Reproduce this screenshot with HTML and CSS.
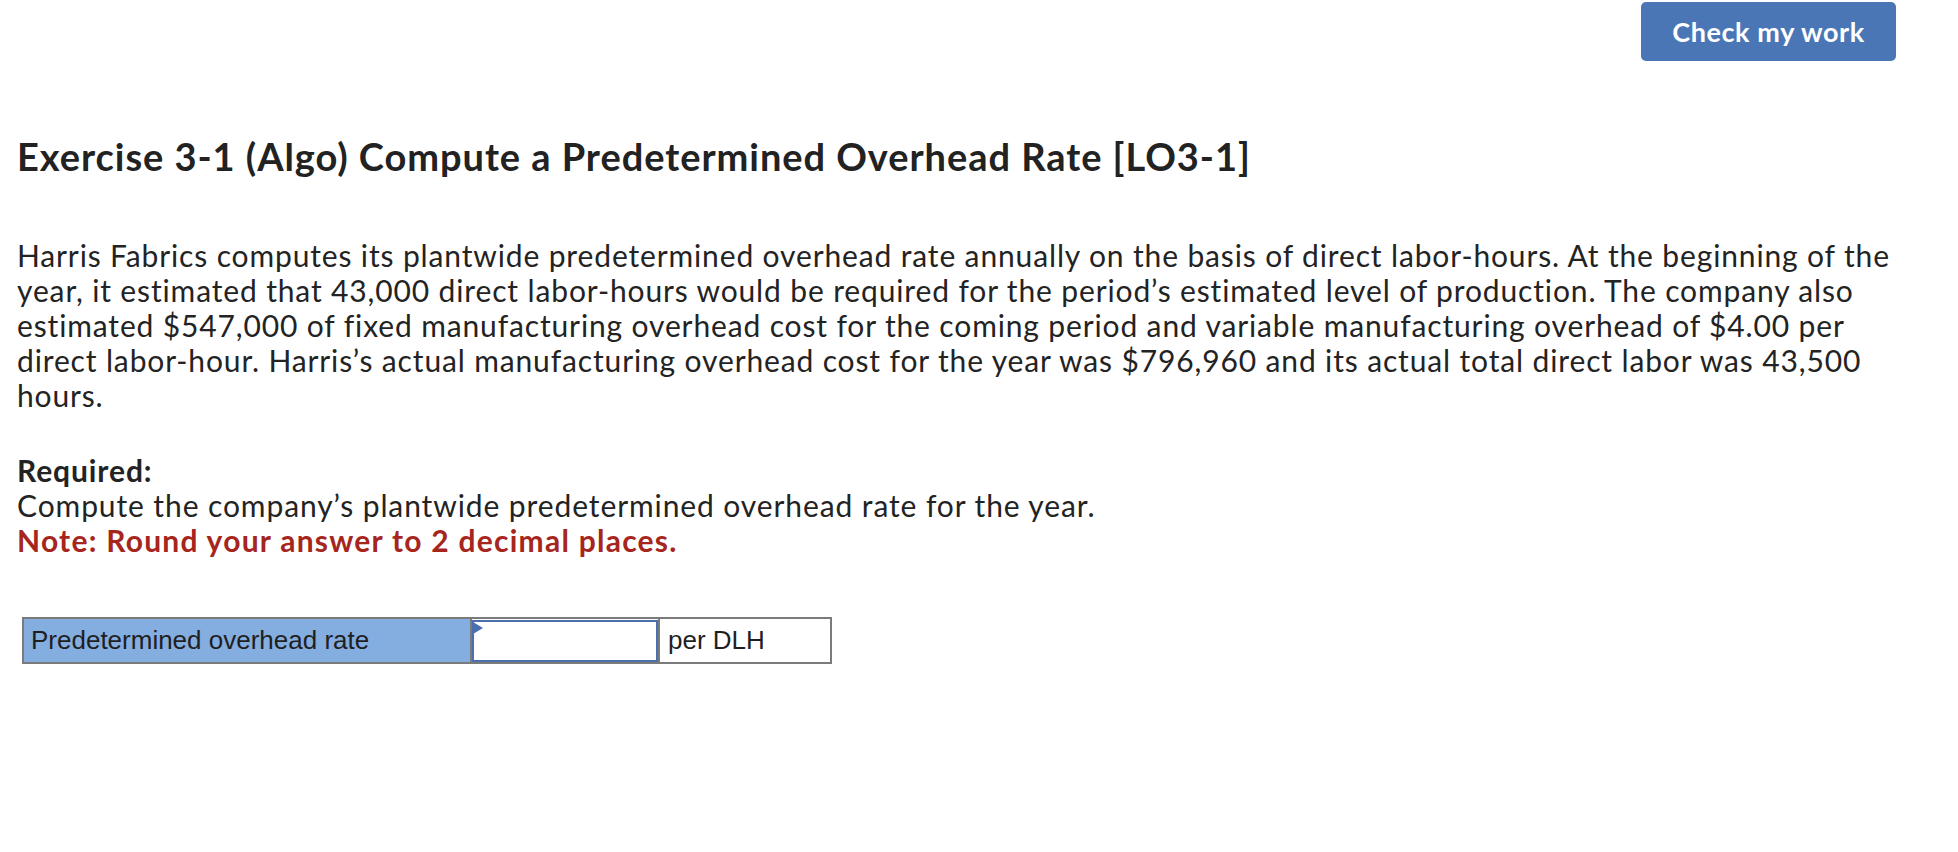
FILE: index.html
```html
<!DOCTYPE html>
<html lang="en">
<head>
<meta charset="utf-8">
<title>Exercise 3-1 (Algo)</title>
<link rel="stylesheet" href="styles.css">
</head>
<body>
<div class="page">
  <div class="topbar">
    <button class="check-btn" type="button">Check my work</button>
  </div>
  <h1 class="title">Exercise 3-1 (Algo) Compute a Predetermined Overhead Rate [LO3-1]</h1>
  <p class="intro">Harris Fabrics computes its plantwide predetermined overhead rate annually on the basis of direct labor-hours. At the beginning of the year, it estimated that 43,000 direct labor-hours would be required for the period’s estimated level of production. The company also estimated $547,000 of fixed manufacturing overhead cost for the coming period and variable manufacturing overhead of $4.00 per direct labor-hour. Harris’s actual manufacturing overhead cost for the year was $796,960 and its actual total direct labor was 43,500 hours.</p>
  <div class="required">
    <div class="req-label">Required:</div>
    <div class="req-text">Compute the company’s plantwide predetermined overhead rate for the year.</div>
    <div class="req-note">Note: Round your answer to 2 decimal places.</div>
  </div>
  <div class="answer-row">
    <div class="cell cell-label">Predetermined overhead rate</div>
    <div class="cell cell-input"><span class="flag"></span><input class="answer-input" type="text" aria-label="Predetermined overhead rate"></div>
    <div class="cell cell-unit">per DLH</div>
  </div>
</div>
</body>
</html>
```

FILE: styles.css
```css
html, body {
  margin: 0;
  padding: 0;
  background: #ffffff;
}

body {
  font-family: "Lato", "Open Sans", sans-serif;
  color: #232323;
}

.page {
  padding: 0 17px;
}

.topbar {
  display: flex;
  justify-content: flex-end;
  padding-top: 2px;
  padding-right: 45px;
}

.check-btn {
  width: 255px;
  height: 59px;
  border: none;
  border-radius: 5px;
  background: #4a76b6;
  color: #ffffff;
  font-family: "Lato", "Open Sans", sans-serif;
  font-weight: 700;
  font-size: 27px;
  letter-spacing: 0.6px;
  cursor: pointer;
  padding: 0;
}

.title {
  margin: 73px 0 0;
  font-size: 38px;
  line-height: 44px;
  font-weight: 700;
  color: #222222;
  letter-spacing: 0.95px;
}

.intro {
  margin: 60px 0 0;
  width: 1875px;
  font-size: 30px;
  line-height: 35px;
  letter-spacing: 0.86px;
}

.required {
  margin-top: 40px;
  font-size: 30px;
  line-height: 35px;
  letter-spacing: 0.9px;
}

.req-label {
  font-weight: 700;
  letter-spacing: 0.9px;
}

.req-note {
  font-weight: 700;
  color: #a6251d;
  letter-spacing: 1.25px;
}

.answer-row {
  display: flex;
  width: fit-content;
  margin: 59px 0 0 5px;
  border: 2px solid #7b7b7b;
  font-family: "Liberation Sans", Arial, sans-serif;
  font-size: 26px;
  color: #1f1f1f;
}

.cell {
  height: 43px;
  display: flex;
  align-items: center;
  box-sizing: border-box;
}

.cell-label {
  width: 448px;
  padding-left: 7px;
  background: #84ade0;
  border-right: 2px solid #7b7b7b;
}

.cell-input {
  position: relative;
  width: 188px;
  border-right: 2px solid #7b7b7b;
  padding: 1px 0 0 0;
}

.answer-input {
  box-sizing: border-box;
  width: 186px;
  height: 42px;
  border: 2px solid #4a70b0;
  margin: 0;
  padding: 0 6px;
  font-family: "Liberation Sans", Arial, sans-serif;
  font-size: 26px;
  outline: none;
  background: #ffffff;
}

.flag {
  position: absolute;
  left: 1px;
  top: 3px;
  width: 0;
  height: 0;
  border-top: 6px solid transparent;
  border-bottom: 6px solid transparent;
  border-left: 10px solid #4a70b0;
}

.cell-unit {
  width: 170px;
  padding-left: 8px;
  background: #ffffff;
}
```
